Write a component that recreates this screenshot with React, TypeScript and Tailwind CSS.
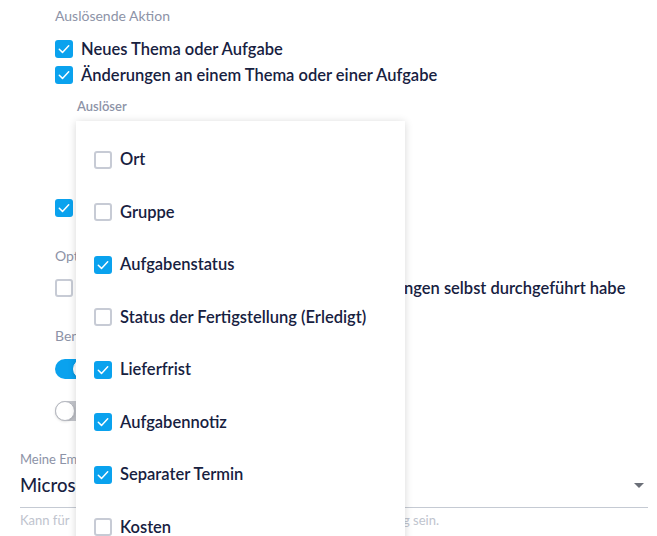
import React from "react";

const blue = "bg-[#0aa2ee]";

function Box({ checked }: { checked: boolean }) {
  if (!checked) {
    return <span className="block h-[18px] w-[18px] shrink-0 rounded-[3px] border-2 border-[#c7cbd5] bg-white" />;
  }
  return (
    <span className={`flex h-[18px] w-[18px] shrink-0 items-center justify-center rounded-[3px] ${blue}`}>
      <svg viewBox="0 0 18 18" className="h-[18px] w-[18px]">
        <path d="M4.3 9.3l3.2 3.1 6.2-6.6" fill="none" stroke="white" strokeWidth="1.5" strokeLinecap="round" strokeLinejoin="round" />
      </svg>
    </span>
  );
}

function CheckRow({ checked, label }: { checked: boolean; label?: string }) {
  return (
    <div className="flex h-[26px] items-center gap-[8px]">
      <Box checked={checked} />
      {label && <span className="whitespace-nowrap text-[16.5px] font-semibold text-[#17213f]">{label}</span>}
    </div>
  );
}

// labels sit under the open menu, only the switches show
function Toggle({ on }: { on: boolean }) {
  return (
    <div className="flex h-[26px] items-center">
      <span className={`relative block h-[20px] w-[40px] rounded-full ${on ? blue : "bg-[#c4c6cc]"}`}>
        <span
          className={`absolute top-0 block h-[20px] w-[20px] rounded-full border bg-white shadow-sm ${
            on ? "left-[18px] border-white" : "left-0 border-[#b5b8c0]"
          }`}
        />
      </span>
    </div>
  );
}

const options: { label: string; checked: boolean }[] = [
  { label: "Ort", checked: false },
  { label: "Gruppe", checked: false },
  { label: "Aufgabenstatus", checked: true },
  { label: "Status der Fertigstellung (Erledigt)", checked: false },
  { label: "Lieferfrist", checked: true },
  { label: "Aufgabennotiz", checked: true },
  { label: "Separater Termin", checked: true },
  { label: "Kosten", checked: false },
];

export default function App() {
  return (
    <div className="relative h-[536px] w-[657px] overflow-hidden bg-white font-['Lato',sans-serif]">
      <div className="pl-[55px] pt-[6px]">
        <div className="h-[19px] text-[14px] leading-[19px] text-[#8d93a7]">Auslösende Aktion</div>
        <div className="mt-[11px]">
          <CheckRow checked label="Neues Thema oder Aufgabe" />
          <CheckRow checked label="Änderungen an einem Thema oder einer Aufgabe" />
        </div>
        <div className="mt-[9px] h-[18px] pl-[22px] text-[13px] font-semibold leading-[18px] text-[#8d93a7]">
          Auslöser
        </div>
        <div className="mt-[80px]">
          <CheckRow checked />
        </div>
        <div className="mt-[25px] h-[19px] text-[14px] leading-[19px] text-[#8d93a7]">Optionen</div>
        <div className="mt-[10px] flex h-[26px] items-center">
          <Box checked={false} />
          <span className="ml-[331px] whitespace-nowrap text-[16.5px] font-semibold text-[#17213f]">
            ngen selbst durchgeführt habe
          </span>
        </div>
        <div className="mt-[25px] h-[19px] text-[14px] leading-[19px] text-[#8d93a7]">Benachrichtigungskanal</div>
        <div className="mt-[11px]">
          <Toggle on />
        </div>
        <div className="mt-[16px]">
          <Toggle on={false} />
        </div>
      </div>

      <div className="ml-[20px] mt-[26px] w-[628px]">
        <div className="h-[18px] text-[13px] leading-[18px] text-[#8d93a7]">Meine Empfangsmethode</div>
        <div className="mt-[5px] flex h-[35px] items-start justify-between border-b border-[#c5cad3]">
          <span className="text-[18.5px] font-medium leading-[24px] text-[#17213f]">Microsoft Teams</span>
          <svg viewBox="0 0 10 5" className="mr-[4px] mt-[10px] h-[5px] w-[10px]">
            <path d="M0 0h10L5 5z" fill="#6b6f78" />
          </svg>
        </div>
        <div className="mt-[3px] flex h-[18px] text-[13px] leading-[18px] text-[#c0c4ce]">
          <span className="w-[383px] shrink-0">Kann für</span>
          <span>g sein.</span>
        </div>
      </div>

      <div className="absolute left-[76px] top-[121px] h-[440px] w-[329px] bg-white pt-[12.5px] shadow-[0_1px_8px_rgba(0,0,0,0.16)]">
        {options.map((o) => (
          <div key={o.label} className="flex h-[52.5px] items-center gap-[8px] pl-[18px]">
            <Box checked={o.checked} />
            <span className="whitespace-nowrap text-[16.5px] font-semibold text-[#17213f]">{o.label}</span>
          </div>
        ))}
      </div>
    </div>
  );
}
